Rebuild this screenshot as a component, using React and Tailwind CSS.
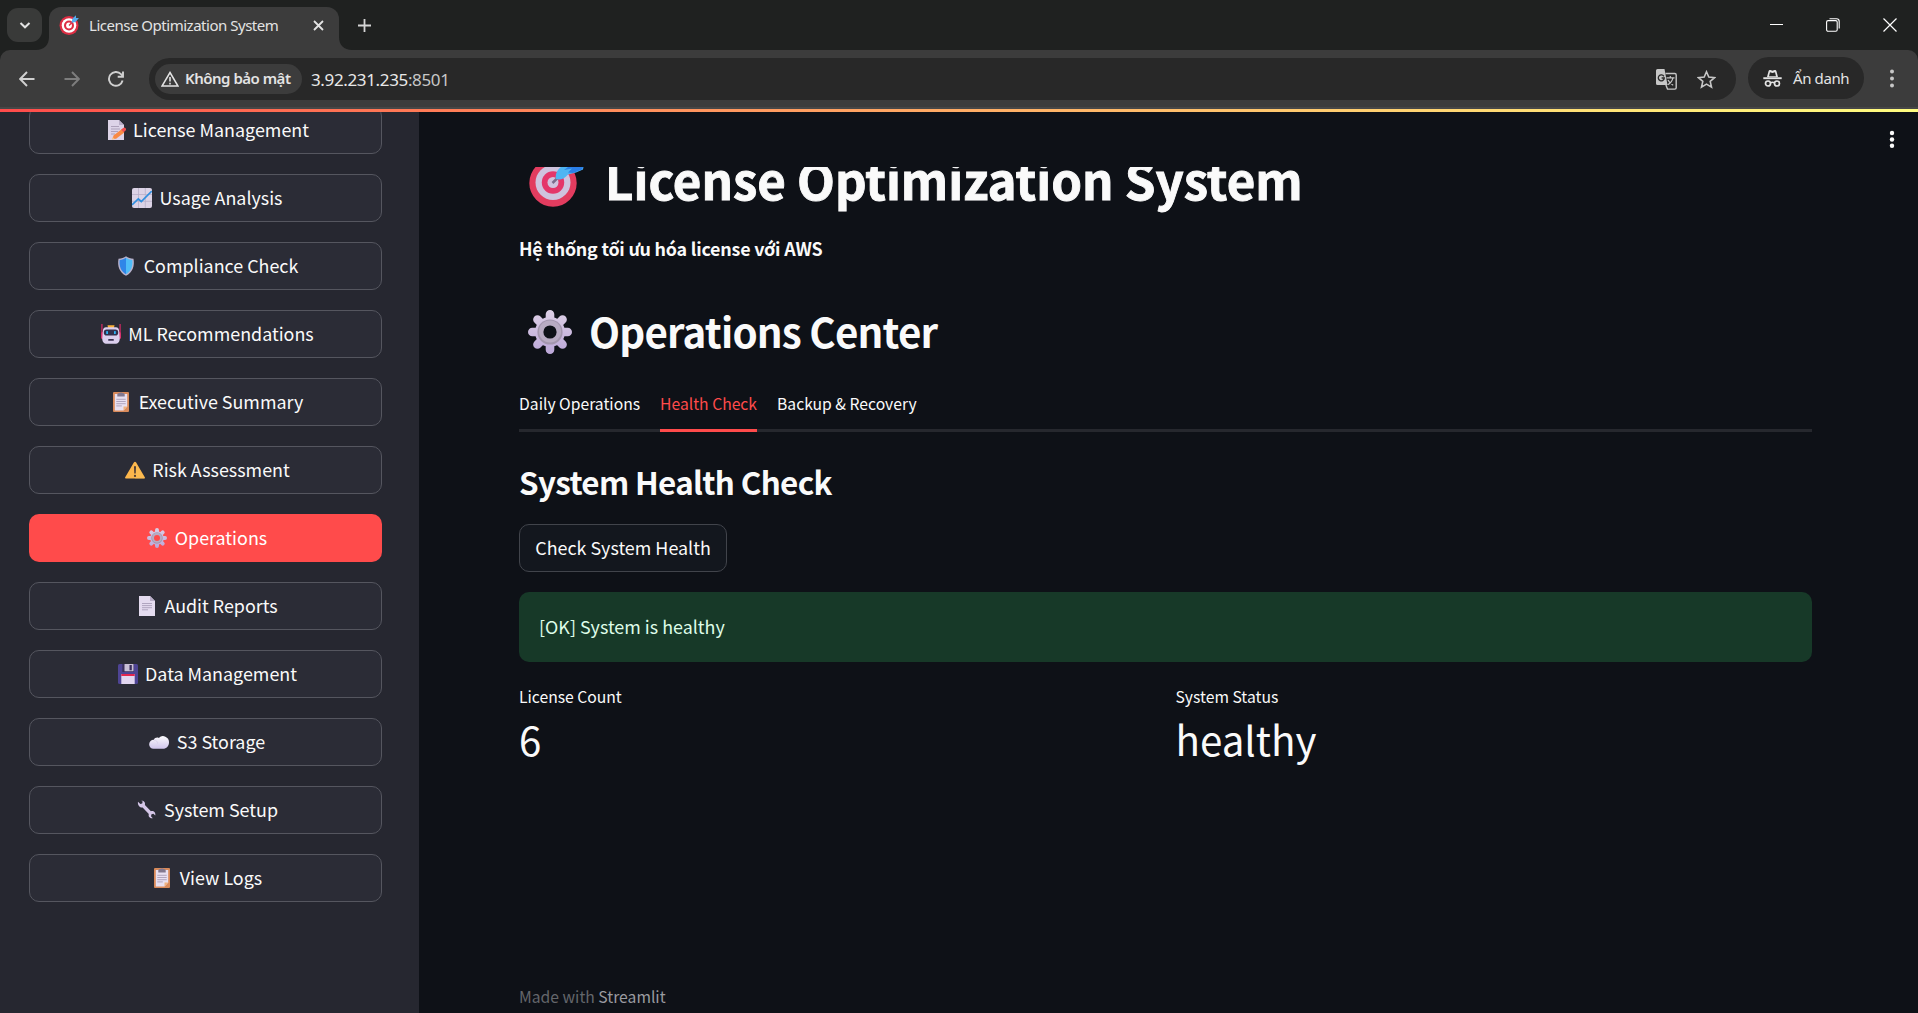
import React from "react";

const UI = "font-['Noto_Sans','Open_Sans',sans-serif]";
const SANS = "font-['Noto_Sans_CJK_SC','Noto_Sans',sans-serif]";

function Svg({ size = 20, children, className = "", box = 20 }) {
  return (
    <svg width={size} height={size} viewBox={`0 0 ${box} ${box}`} fill="none" className={`block shrink-0 ${className}`}>
      {children}
    </svg>
  );
}

const Memo = () => (
  <Svg>
    <path d="M2 0h11l5 5v15H2z" fill="#ddd3e8" />
    <path d="M13 0v5h5z" fill="#b9aec8" />
    <path d="M5 6.5h8M5 9h9M5 11.5h7M5 14h4" stroke="#a89bb5" strokeWidth="0.9" />
    <path d="M6.500 19l1-3.400 8.200-6.300 2.600 3.200-8.200 6.300z" fill="#f98a45" />
    <path d="M15.100 9.700l2-1.600a1.700 1.700 0 0 1 2.300 2.700l-1.800 1.500z" fill="#f0504f" />
    <path d="M5.800 19.700l1-2.700 1.900 2.200z" fill="#f9c58a" />
  </Svg>
);
const Chart = () => (
  <Svg>
    <rect width="20" height="20" rx="2" fill="#dcd3e6" />
    <path d="M6.500 0v20M13.300 0v20M0 6.500h20M0 13.300h20" stroke="#b9aec8" strokeWidth="0.8" />
    <path d="M0 17L6.300 11l3 2.500L19.800 3" stroke="#2f8fdf" strokeWidth="1.700" />
  </Svg>
);
const Shield = () => (
  <Svg>
    <path d="M10 .2c2 1.600 4.500 2.200 7.500 2.500 1.300 7.500-.8 13.500-7.500 17.100C3.300 16.200 1.200 10.200 2.500 2.700 5.500 2.400 8 1.800 10 .2z" fill="#b9b3cd" />
    <path d="M10 1.700v16.600C4.700 15 3 10 3.700 4 6.200 3.700 8.300 3 10 1.700z" fill="#2f86e8" />
    <path d="M10 1.700v16.600C15.300 15 17 10 16.300 4 13.800 3.700 11.700 3 10 1.700z" fill="#4fbdf8" />
  </Svg>
);
const Robot = () => (
  <Svg>
    <path d="M.9 0v13M19.100 0v13" stroke="#c22a5f" strokeWidth="1.400" />
    <rect x="0" y="8" width="4" height="7" rx="1.500" fill="#d8336f" />
    <rect x="16" y="8" width="4" height="7" rx="1.500" fill="#d8336f" />
    <path d="M6.500 1.200h7l-.6 3H7.100z" fill="#fbb03a" />
    <path d="M5 3.300h10c2 0 3 1.500 3.200 4l.5 7c.2 3.500-1.500 5.500-4.700 5.500H6c-3.200 0-4.900-2-4.700-5.500l.5-7c.2-2.500 1.200-4 3.200-4z" fill="#dccfee" />
    <rect x="2.800" y="5.500" width="14.400" height="6" rx="2.800" fill="#33304d" />
    <rect x="5.200" y="7" width="1.800" height="3" rx=".6" fill="#2fb4f5" />
    <rect x="13" y="7" width="1.800" height="3" rx=".6" fill="#2fb4f5" />
    <rect x="7.200" y="15" width="5.600" height="1.800" rx=".5" fill="#3a3150" />
  </Svg>
);
const Clip = () => (
  <Svg>
    <rect x="2" y="0" width="16" height="20" rx="1" fill="#d98a5a" />
    <path d="M3.800 2h12.400v12.500L12.500 18.500H3.800z" fill="#e8e0f1" />
    <path d="M12.500 18.500l3.700-4h-3.700z" fill="#f0b27e" />
    <path d="M6.300 4.500V2.400c0-1 1-.8 1.500-1.300.6-.9 3.800-.9 4.400 0 .5.500 1.500.3 1.500 1.300v2.100z" fill="#82788f" />
    <path d="M5.300 7.300h9.400M5.300 9.500h9.400M5.300 11.700h9.400M5.300 13.900h5.500" stroke="#a196b1" strokeWidth="0.800" />
  </Svg>
);
const Warn = () => (
  <Svg>
    <path d="M9 2.300c.5-.9 1.500-.9 2 0l8.800 15c.4.700.1 1.200-.7 1.200H.9c-.8 0-1.100-.5-.7-1.200z" fill="#fdb64b" />
    <path d="M10 2l9.800 16.500H10z" fill="#fbc45a" opacity=".4" />
    <path d="M9 6.300h2l-.3 7.200H9.300z" fill="#4a3a35" />
    <circle cx="10" cy="15.900" r="1.100" fill="#4a3a35" />
  </Svg>
);
function Gear({ size = 20, hole = "#ff4b4b" }) {
  return (
    <Svg size={size} box={44}>
      <defs>
        <linearGradient id="gearFill" x1="0" y1="0" x2="0" y2="44" gradientUnits="userSpaceOnUse">
          <stop stopColor="#ddd0e6" />
          <stop offset="1" stopColor="#bba7d8" />
        </linearGradient>
      </defs>
      <g fill="url(#gearFill)">
        <path d="M17.700 12V4.300a4.300 4.300 0 0 1 8.600 0V12zM17.700 32v7.700a4.300 4.300 0 0 0 8.600 0V32zM12 17.700H4.300a4.300 4.300 0 0 0 0 8.600H12zM32 17.700h7.700a4.300 4.300 0 0 1 0 8.600H32z" />
        <path d="M11.900 18L6.400 12.500a4.300 4.300 0 0 1 6.100-6.100L18 11.900zM32.100 18l5.500-5.500a4.300 4.300 0 0 0-6.100-6.100L26 11.900zM11.900 26l-5.500 5.500a4.300 4.300 0 0 0 6.100 6.100L18 32.100zM32.100 26l5.500 5.500a4.300 4.300 0 0 1-6.100 6.100L26 32.100z" />
        <circle cx="22" cy="22" r="15" />
      </g>
      <circle cx="22" cy="22" r="12.600" fill="#a396ae" />
      <circle cx="22" cy="21.400" r="11" fill="#b8abc2" />
      <circle cx="22" cy="22" r="6.600" fill={hole} />
    </Svg>
  );
}
const Page = () => (
  <Svg>
    <path d="M2 0h11l5 5v15H2z" fill="#e4dbef" />
    <path d="M13 0v5h5z" fill="#b9aec8" />
    <path d="M5 7.500h10M5 9.600h10M5 11.700h10M5 13.800h6" stroke="#a297b2" strokeWidth="0.800" />
  </Svg>
);
const Floppy = () => (
  <Svg>
    <rect width="20" height="20" rx="1.500" fill="#4e4494" />
    <rect x="4.300" y="0" width="11.500" height="8" fill="#3a2f5c" />
    <rect x="6.500" y="0" width="9" height="7.300" rx=".5" fill="#c9bfd6" />
    <rect x="11.500" y="1" width="2.300" height="5.300" fill="#3a2f5c" />
    <rect x="3.300" y="10" width="13.400" height="10" fill="#e2d6f0" />
    <rect x="3.300" y="10" width="13.400" height="2" fill="#e3254f" />
  </Svg>
);
const Cloud = () => (
  <Svg>
    <defs>
      <linearGradient id="cloudFill" x1="0" y1="3" x2="0" y2="17" gradientUnits="userSpaceOnUse">
        <stop stopColor="#ffffff" />
        <stop offset="1" stopColor="#cfc4ec" />
      </linearGradient>
    </defs>
    <path d="M4.500 16.800a4.400 4.400 0 0 1 .3-9c.8-2 3.200-2.800 5-1.900a6 6 0 0 1 10.200 4.400c0 4-2.600 6.500-6 6.500z" fill="url(#cloudFill)" />
    <path d="M5 8c2.200 0 3.700 1.600 3.600 3.600" stroke="#d6cde9" strokeWidth=".8" />
  </Svg>
);
const Wrench = () => (
  <Svg>
    <path d="M1 1.800L3.300 4l1.900-.5.500-1.900L4.300.9c2.300-.5 4.300 1.600 3.600 4l6 6.300c2.700-.8 5 1.400 4.400 4.300l-1.900-1.800-1.900.6-.5 2 1.800 1.900c-2.700.4-4.800-1.800-4-4.300L5.600 7.500C2.900 8.200.3 5 1 1.800z" fill="#d5c7e8" />
  </Svg>
);

const menu = [
  { label: "License Management", Icon: Memo },
  { label: "Usage Analysis", Icon: Chart },
  { label: "Compliance Check", Icon: Shield },
  { label: "ML Recommendations", Icon: Robot },
  { label: "Executive Summary", Icon: Clip },
  { label: "Risk Assessment", Icon: Warn },
  { label: "Operations", Icon: Gear, active: true },
  { label: "Audit Reports", Icon: Page },
  { label: "Data Management", Icon: Floppy },
  { label: "S3 Storage", Icon: Cloud },
  { label: "System Setup", Icon: Wrench },
  { label: "View Logs", Icon: Clip },
];

function Target() {
  return (
    <svg width="60" height="60" viewBox="0 0 60 60" className="block shrink-0">
      <circle cx="28" cy="32" r="23.700" fill="#e23c5f" />
      <circle cx="28" cy="31.500" r="17.500" fill="#cfc3de" />
      <circle cx="28" cy="31.500" r="11.200" fill="#e4366a" />
      <circle cx="28" cy="31.500" r="5.500" fill="#cfc3de" />
      <path d="M27.500 32l6-6" stroke="#7b6c8c" strokeWidth="2.500" />
      <path d="M31 28c-1.500-5 2-10 6-13l3-8 19 6-1 5.500-7 3-8 2c-3 4-8 6-12 4.500z" fill="#4fb5f2" />
      <path d="M39 19l8-6 12 1-2 4.500-9 3.500-5-.5 4-4z" fill="#2b7fe8" />
    </svg>
  );
}

function Favicon() {
  return (
    <Svg size={20}>
      <circle cx="10" cy="10.500" r="9.500" fill="#dd2e44" />
      <circle cx="10" cy="10.500" r="7.300" fill="#fff" />
      <circle cx="10" cy="10.500" r="5" fill="#dd2e44" />
      <circle cx="10" cy="10.500" r="2.900" fill="#fff" />
      <path d="M10 10.500l5-5" stroke="#dd2e44" strokeWidth="1.300" />
      <path d="M12.500 7.800L13.500 3.500 17 .3v2.800h2.900L16.500 7z" fill="#55acee" />
    </Svg>
  );
}

function TabStrip() {
  return (
    <div className="flex h-[50px] items-start bg-[#1f2120]">
      <button className="mt-2 ml-[7px] flex h-[34px] w-[35px] items-center justify-center rounded-[11px] bg-[#393a39]">
        <Svg size={12} box={12}><path d="M1.500 4l4.500 4.300L10.500 4" stroke="#e3e3e3" strokeWidth="2" /></Svg>
      </button>
      <div className="relative mt-[7px] ml-[7px] flex h-[43px] w-[290px] items-center rounded-t-[12px] bg-[#3c3c3c] pr-[15px] pb-[7px] pl-[10px]">
        <svg className="absolute bottom-0 -left-[13px]" width="13" height="13"><path d="M13 0v13H0C8 13 13 8 13 0z" fill="#3c3c3c" /></svg>
        <svg className="absolute -right-[13px] bottom-0" width="13" height="13"><path d="M0 0v13h13C5 13 0 8 0 0z" fill="#3c3c3c" /></svg>
        <Favicon />
        <span className="ml-[10px] text-[15px] tracking-[-0.48px] whitespace-nowrap text-[#e3e3e3]">License Optimization System</span>
        <Svg size={11} box={11} className="ml-auto"><path d="M1 1l9 9M10 1l-9 9" stroke="#e3e3e3" strokeWidth="1.800" /></Svg>
      </div>
      <Svg size={13} box={13} className="mt-[19px] ml-[19px]"><path d="M6.500 0v13M0 6.500h13" stroke="#d5d5d5" strokeWidth="1.800" /></Svg>
      <div className="ml-auto flex h-[50px] items-center pr-[21px]">
        <Svg size={13} box={13}><path d="M0 5.500h13" stroke="#fff" /></Svg>
        <Svg size={14} box={14} className="ml-[43px]">
          <path d="M3.500.8h7A2.700 2.700 0 0 1 13.200 3.500v7" stroke="#fff" strokeWidth="1.100" />
          <rect x=".6" y="2.600" width="10.600" height="10.600" rx="1.500" stroke="#fff" strokeWidth="1.100" />
        </Svg>
        <Svg size={14} box={14} className="ml-[43px]"><path d="M.5.5l13 13M13.500.5l-13 13" stroke="#fff" strokeWidth="1.200" /></Svg>
      </div>
    </div>
  );
}

function Toolbar() {
  return (
    <div className="bg-[#1f2120]">
      <div className="flex h-[59px] items-start rounded-t-[10px] border-b-2 border-[#474747] bg-[#3c3c3c] pt-[8px] pr-[23.500px] pl-[19px]">
        <div className="flex h-[42px] items-center">
          <Svg size={16} box={16}><path d="M15.500 8H1.500M8 1L1.200 8 8 15" stroke="#d0d0d0" strokeWidth="1.900" /></Svg>
          <Svg size={16} box={16} className="ml-[29px]"><path d="M.5 8h14M8 1l6.800 7L8 15" stroke="#7d7d7d" strokeWidth="1.900" /></Svg>
          <Svg size={16} box={16} className="ml-[28px]">
            <path d="M14.600 9.500A6.900 6.900 0 1 1 13 3.200l1.500 1.600" stroke="#d0d0d0" strokeWidth="1.900" />
            <path d="M15 .5v5.300H9.700" stroke="#d0d0d0" strokeWidth="1.900" />
          </Svg>
        </div>
        <div className="ml-[25px] flex h-[42px] w-[1587px] items-center rounded-full bg-[#282828] pr-[20px] pl-[6px]">
          <div className="flex h-[30px] w-[147px] items-center rounded-full bg-[#3c3c3c] pl-[6px]">
            <Svg size={18} box={18}>
              <path d="M9 2.500L17 16H1z" stroke="#e3e3e3" strokeWidth="1.500" />
              <path d="M9 7v4.500M9 12.700v1.800" stroke="#e3e3e3" strokeWidth="1.600" />
            </Svg>
            <span className="-mt-px ml-[6px] text-[15px] font-semibold tracking-[-0.5px] whitespace-nowrap text-[#e3e3e3]">Không bảo mật</span>
          </div>
          <span className="ml-[9px] pt-px text-[17px] tracking-[-0.36px] text-[#e8e8e8]">3.92.231.235<span className="text-[#c7c7c7]">:8501</span></span>
          <Svg size={21} box={21} className="ml-auto">
            <path d="M1.500 0h7l3 16h-10A1.500 1.500 0 0 1 0 14.500v-13A1.500 1.500 0 0 1 1.500 0z" fill="#c7c7c7" />
            <path d="M9.500 4.500h9.300a1.400 1.400 0 0 1 1.400 1.400v12.800a1.400 1.400 0 0 1-1.400 1.400H11.500l-1.600-4" stroke="#c7c7c7" strokeWidth="1.400" />
            <path d="M7.900 7.300A3 3 0 1 0 8.300 9H5.600" stroke="#282828" strokeWidth="1.300" />
            <path d="M10.500 8.800h8M14.300 7v1.800M17 8.800c-.8 3.300-2.600 5.400-5.300 7M12 11c1 2 2.800 4 5.200 5.200" stroke="#c7c7c7" strokeWidth="1.200" />
          </Svg>
          <Svg size={19} box={19} className="ml-[20px]">
            <path d="M9.500 1.800l2.300 5.300 5.800.5-4.400 3.800 1.300 5.700-5-3-5 3 1.300-5.700L1.400 7.600l5.800-.5z" stroke="#c7c7c7" strokeWidth="1.600" />
          </Svg>
        </div>
        <div className="-mt-px ml-[12px] flex h-[42px] w-[116px] items-center rounded-full bg-[#282828] pl-[15px]">
          <Svg size={19} box={19}>
            <path d="M4 8L5.600 2c.3-1 .9-1.300 1.800-1l2.100.7L11.600 1c.9-.3 1.500 0 1.800 1L15 8z" fill="#e3e3e3" />
            <path d="M7 3.200l-1 4h7l-1-4-2.500.8z" fill="#282828" />
            <path d="M.3 9.200h18.400" stroke="#e3e3e3" strokeWidth="1.900" />
            <circle cx="5" cy="14.500" r="2.500" stroke="#e3e3e3" strokeWidth="1.700" />
            <circle cx="14" cy="14.500" r="2.500" stroke="#e3e3e3" strokeWidth="1.700" />
            <path d="M7.300 14c1.300-.8 3.100-.8 4.400 0" stroke="#e3e3e3" strokeWidth="1.500" />
          </Svg>
          <span className="ml-[11px] text-[15px] tracking-[-0.4px] whitespace-nowrap text-[#e3e3e3]">Ẩn danh</span>
        </div>
        <svg width="6" height="20" viewBox="0 0 6 20" className="mt-[11px] ml-auto block" fill="#c7c7c7">
          <circle cx="3" cy="2.500" r="2" /><circle cx="3" cy="9.500" r="2" /><circle cx="3" cy="16.500" r="2" />
        </svg>
      </div>
    </div>
  );
}

function Sidebar() {
  return (
    <aside className="w-[419px] shrink-0 overflow-hidden bg-[#262730] px-[29px]">
      <nav className="-mt-[6px] flex w-[353px] flex-col gap-5">
        {menu.map(({ label, Icon, active }) => (
          <button
            key={label}
            className={
              active
                ? "flex h-12 items-center justify-center gap-1 rounded-[10px] bg-[#ff4b4b] text-white"
                : "flex h-12 items-center justify-center gap-1 rounded-[10px] border border-[#55565f] bg-[#2b2c36] text-[#fafafa]"
            }
          >
            <span className="flex w-[27px] justify-center"><Icon /></span>
            <span className="pb-[2px] text-[17.900px] leading-[30px] whitespace-nowrap">{label}</span>
          </button>
        ))}
      </nav>
    </aside>
  );
}

function Metric({ label, value }) {
  return (
    <div className="flex-1">
      <div className="text-[15.700px] leading-[26px]">{label}</div>
      <div className="mt-[2px] text-[40.300px] leading-[54px]">{value}</div>
    </div>
  );
}

function Main() {
  return (
    <main className="flex min-w-0 flex-1 flex-col bg-[#0e1117] text-[#fafafa]">
      <header className="flex h-[55px] shrink-0 justify-end pr-[23.500px]">
        <svg width="6" height="20" viewBox="0 0 6 20" className="mt-[18px] block" fill="#fafafa">
          <circle cx="3" cy="3" r="2.200" /><circle cx="3" cy="9.500" r="2.200" /><circle cx="3" cy="15.800" r="2.200" />
        </svg>
      </header>
      <div className="flex min-h-0 flex-1 flex-col overflow-hidden pr-[106px] pl-[100px]">
        <h1 className="-mt-[22px] flex h-[66px] shrink-0 pl-[6px] text-[49.200px] leading-[66px] font-bold whitespace-nowrap [-webkit-text-stroke:0.9px_#fafafa]">
          <span className="pt-[6px]"><Target /></span>
          <span className="ml-[20px] pt-px">License Optimization System</span>
        </h1>
        <p className="mt-[22px] shrink-0 text-[17.900px] leading-[30px] font-bold tracking-[-0.22px]">Hệ thống tối ưu hóa license với AWS</p>
        <h2 className="mt-[41px] flex h-[54px] shrink-0 pl-[9px] text-[40.300px] leading-[54px] font-semibold tracking-[-0.8px]">
          <span className="pt-[6px]"><Gear size={44} hole="#0e1117" /></span>
          <span className="ml-[17px]">Operations Center</span>
        </h2>
        <div className="mt-[20px] flex h-[54px] shrink-0 items-end gap-5 border-b-[3px] border-[#26282e] text-[15.700px] leading-[49px] whitespace-nowrap">
          <button className="h-[51px]">Daily Operations</button>
          <button className="-mb-[3px] h-[54px] border-b-[3px] border-[#ff4b4b] text-[#ff4b4b]">Health Check</button>
          <button className="h-[51px]">Backup &amp; Recovery</button>
        </div>
        <h3 className="mt-[29px] shrink-0 text-[31.400px] leading-[42px] font-semibold tracking-[-0.67px]">System Health Check</h3>
        <button className="mt-[21px] h-12 w-[208px] shrink-0 rounded-[10px] border border-[#41444b] bg-[#13171e] pb-[2px] text-[17.900px] leading-[30px]">Check System Health</button>
        <div className="mt-5 flex h-[70px] shrink-0 items-center rounded-[10px] bg-[#173928] px-5 pb-[2px] text-[17.900px] text-[#dffde9]">[OK] System is healthy</div>
        <div className="mt-[22px] flex shrink-0 gap-5">
          <Metric label="License Count" value="6" />
          <Metric label="System Status" value="healthy" />
        </div>
        <footer className="mt-[218px] shrink-0 text-[15.700px] leading-[26px] text-[#64666b]">
          Made with <span className="text-[#9a9ba0]">Streamlit</span>
        </footer>
      </div>
    </main>
  );
}

export default function App() {
  return (
    <div className="flex h-[1013px] w-[1918px] flex-col overflow-hidden bg-[#0e1117]">
      <div className={UI}>
        <TabStrip />
        <Toolbar />
      </div>
      <div className="h-[3px] shrink-0 bg-linear-to-r from-[#ff4b4b] to-[#fffd80]" />
      <div className={`flex min-h-0 flex-1 ${SANS}`}>
        <Sidebar />
        <Main />
      </div>
    </div>
  );
}
